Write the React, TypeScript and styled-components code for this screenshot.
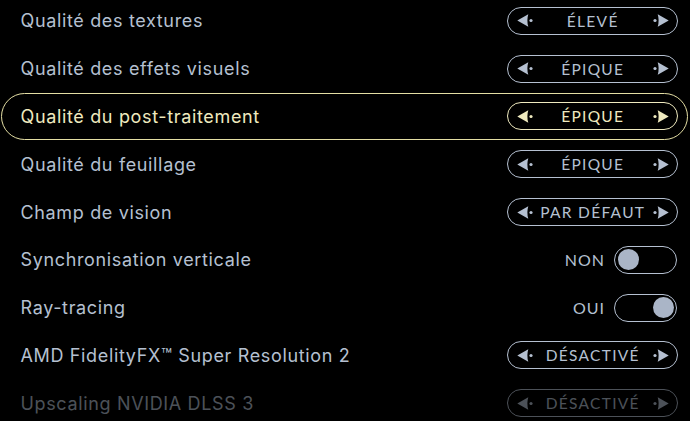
import React from 'react'
import styled, { createGlobalStyle, css } from 'styled-components'

const GlobalStyle = createGlobalStyle`
  html, body {
    margin: 0;
    padding: 0;
    background: #000;
    overflow: hidden;
  }
`

const GREY = '#b5c0d1'
const CREAM = '#efeabf'

const Page = styled.div`
  width: 690px;
  height: 421px;
  background: #000;
  font-family: Inter, 'Noto Sans', sans-serif;
  overflow: hidden;
`

const List = styled.div`
  display: flex;
  flex-direction: column;
  margin-top: -3px;
`

const Row = styled.div<{ $active?: boolean; $faded?: boolean }>`
  height: 47.8px;
  box-sizing: border-box;
  margin: 0 2px 0 1px;
  padding: 0 9px 0 18.5px;
  display: flex;
  align-items: center;
  justify-content: space-between;
  border: 1.6px solid transparent;
  border-radius: 24px;
  color: ${GREY};
  ${(p) =>
    p.$active &&
    css`
      border-color: #e4dea4;
      color: ${CREAM};
    `}
  ${(p) =>
    p.$faded &&
    css`
      opacity: 0.42;
    `}
`

const Label = styled.span`
  font-size: 18px;
  letter-spacing: 0.65px;
`

const Pill = styled.div`
  box-sizing: border-box;
  min-width: 171px;
  height: 28px;
  border: 1.5px solid currentColor;
  border-radius: 14px;
  padding: 0 8px 0 8.5px;
  display: flex;
  align-items: center;
  gap: 7px;
`

const Value = styled.span`
  flex: 1;
  text-align: center;
  font-family: Lato, 'Noto Sans', sans-serif;
  font-size: 15.5px;
  letter-spacing: 1.3px;
  white-space: nowrap;
`

const SwitchWrap = styled.div`
  display: flex;
  align-items: center;
  gap: 9px;
  margin-right: 1px;
`

const SwitchText = styled.span`
  font-family: Lato, 'Noto Sans', sans-serif;
  font-size: 16px;
  letter-spacing: 1px;
`

const Track = styled.div<{ $on: boolean }>`
  box-sizing: border-box;
  width: 63px;
  height: 28px;
  border: 1.5px solid currentColor;
  border-radius: 14px;
  padding: 0 2.5px;
  display: flex;
  align-items: center;
  justify-content: ${(p) => (p.$on ? 'flex-end' : 'flex-start')};
`

const Knob = styled.div`
  width: 21px;
  height: 21px;
  border-radius: 50%;
  background: #aab5c7;
`

const Arrow = ({ dir }: { dir: 'left' | 'right' }) => (
  <svg
    width="16"
    height="13"
    viewBox="0 0 16 13"
    style={{ flexShrink: 0, transform: dir === 'right' ? 'scaleX(-1)' : undefined }}
  >
    <path d="M0.3 6.5 L11.3 0.3 Q9.4 6.5 11.3 12.7 Z" fill="currentColor" />
    <circle cx="14" cy="6.5" r="1.6" fill="currentColor" />
  </svg>
)

type Setting =
  | { label: string; kind: 'select'; value: string }
  | { label: string; kind: 'switch'; on: boolean }

const settings: Setting[] = [
  { label: 'Qualité des textures', kind: 'select', value: 'ÉLEVÉ' },
  { label: 'Qualité des effets visuels', kind: 'select', value: 'ÉPIQUE' },
  { label: 'Qualité du post-traitement', kind: 'select', value: 'ÉPIQUE' },
  { label: 'Qualité du feuillage', kind: 'select', value: 'ÉPIQUE' },
  { label: 'Champ de vision', kind: 'select', value: 'PAR DÉFAUT' },
  { label: 'Synchronisation verticale', kind: 'switch', on: false },
  { label: 'Ray-tracing', kind: 'switch', on: true },
  { label: 'AMD FidelityFX™ Super Resolution 2', kind: 'select', value: 'DÉSACTIVÉ' },
  { label: 'Upscaling NVIDIA DLSS 3', kind: 'select', value: 'DÉSACTIVÉ' },
]

export default function App() {
  return (
    <Page>
      <GlobalStyle />
      <List>
        {settings.map((s, i) => (
          <Row key={s.label} $active={i === 2} $faded={i === 8}>
            <Label>{s.label}</Label>
            {s.kind === 'select' ? (
              <Pill>
                <Arrow dir="left" />
                <Value>{s.value}</Value>
                <Arrow dir="right" />
              </Pill>
            ) : (
              <SwitchWrap>
                <SwitchText>{s.on ? 'OUI' : 'NON'}</SwitchText>
                <Track $on={s.on}>
                  <Knob />
                </Track>
              </SwitchWrap>
            )}
          </Row>
        ))}
      </List>
    </Page>
  )
}
